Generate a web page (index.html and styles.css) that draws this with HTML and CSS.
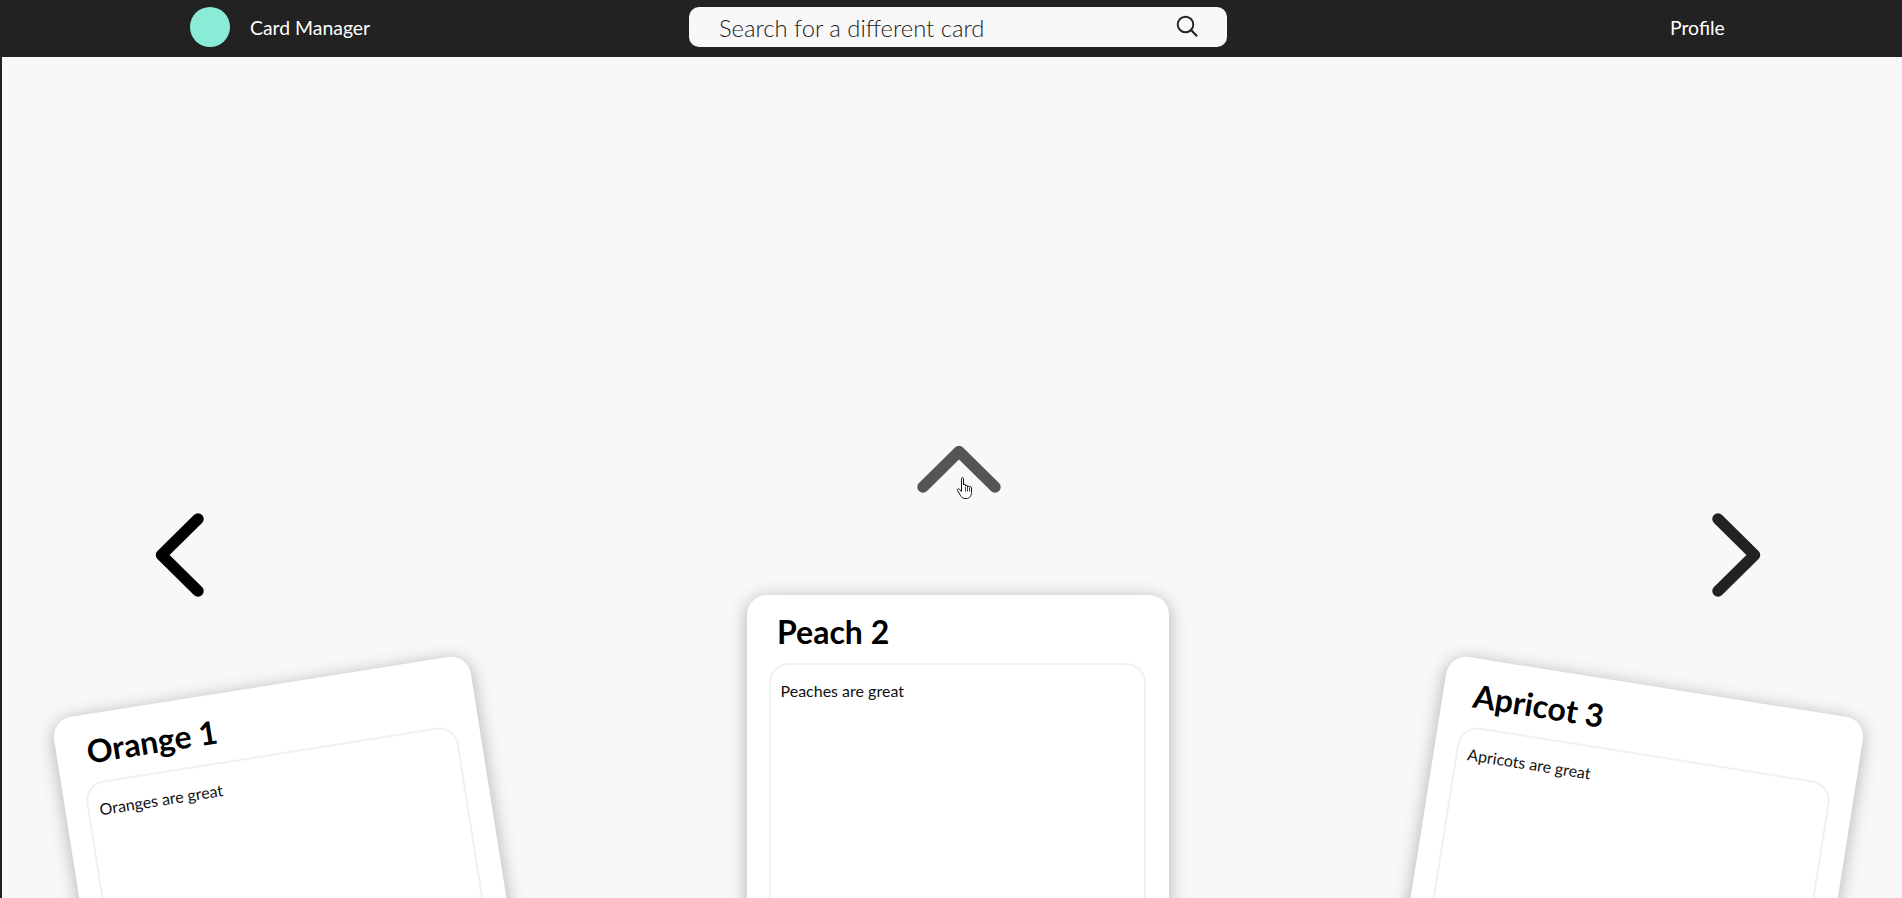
FILE: index.html
```html
<!DOCTYPE html>
<html lang="en">
<head>
<meta charset="utf-8">
<title>Card Manager</title>
<link rel="stylesheet" href="styles.css">
</head>
<body>
<header class="nav">
  <div class="brand">
    <span class="logo"></span>
    <span class="brand-name">Card Manager</span>
  </div>
  <div class="search">
    <span class="search-text">Search for a different card</span>
    <svg class="search-icon" viewBox="0 0 22 22" width="22" height="22" aria-hidden="true">
      <circle cx="9.5" cy="9.5" r="7.8" fill="none" stroke="#222" stroke-width="1.9"/>
      <path d="M15 15l5.4 5.6" fill="none" stroke="#222" stroke-width="2.2" stroke-linecap="round"/>
    </svg>
  </div>
  <a class="profile">Profile</a>
</header>
<main class="stage">
  <article class="card card-left">
    <h2 class="card-title">Orange 1</h2>
    <div class="card-body">Oranges are great</div>
  </article>
  <article class="card card-mid">
    <h2 class="card-title">Peach 2</h2>
    <div class="card-body">Peaches are great</div>
  </article>
  <article class="card card-right">
    <h2 class="card-title">Apricot 3</h2>
    <div class="card-body">Apricots are great</div>
  </article>

  <svg class="chev chev-up" viewBox="0 0 84 48" width="84" height="48" aria-hidden="true">
    <path d="M6 42L42 6.500L78 42" fill="none" stroke="#555" stroke-width="11.500" stroke-linecap="round" stroke-linejoin="round"/>
  </svg>
  <svg class="chev chev-left" viewBox="0 0 50 84" width="50" height="84" aria-hidden="true">
    <path d="M43 6L6.500 42L43 78" fill="none" stroke="#000" stroke-width="11.500" stroke-linecap="round" stroke-linejoin="round"/>
  </svg>
  <svg class="chev chev-right" viewBox="0 0 50 84" width="50" height="84" aria-hidden="true">
    <path d="M7 6L43.500 42L7 78" fill="none" stroke="#222" stroke-width="11.500" stroke-linecap="round" stroke-linejoin="round"/>
  </svg>
  <svg class="cursor" viewBox="0 0 18 23" width="18" height="23" aria-hidden="true">
    <path d="M5.500 1.500c0-1.300 2-1.300 2 0V8c0-1 2-1 2 0v1c0-1 2-1 2 0v1c0-1 2-1 2 0 .8-.5 2-.2 2 1v4.500c0 3-1.800 6-5 6H9c-2.500 0-3.500-1.500-4.500-3L1.500 13.500c-.8-1.200.8-2.300 1.800-1.300l2.200 2.300z" fill="#fff" stroke="#111" stroke-width="1" stroke-linejoin="round"/>
    <path d="M9.500 9.500v5M11.500 10v4.500M13.500 10.500v4" fill="none" stroke="#111" stroke-width=".8"/>
  </svg>
</main>
</body>
</html>
```
FILE: styles.css
```css
* { box-sizing: border-box; }
html, body { margin: 0; height: 100%; }
body {
  height: 898px;
  overflow: hidden;
  display: flex;
  flex-direction: column;
  background: #222;
  font-family: Lato, "Liberation Sans", sans-serif;
}
.nav {
  height: 57px;
  flex: none;
  display: flex;
  align-items: center;
  padding-bottom: 3px;
  background: #222;
  color: #fff;
  font-size: 19.4px;
}
.brand {
  display: flex;
  align-items: center;
  gap: 20px;
  margin-left: 190px;
  width: 499px;
}
.logo {
  width: 40px;
  height: 40px;
  border-radius: 50%;
  background: #8aecd7;
}
.search {
  width: 538px;
  height: 40px;
  display: flex;
  align-items: center;
  justify-content: space-between;
  padding: 0 29px 0 30px;
  background: #f8f8f8;
  border-radius: 10px;
}
.search-text {
  font-weight: 300;
  font-size: 23.8px;
  line-height: 30px;
  margin-top: 2px;
  color: #222;
}
.search-icon { margin-top: -2px; }
.profile { margin-left: 443px; }
.stage {
  position: relative;
  flex: 1;
  margin-left: 2px;
  background: #f8f8f8;
  display: flex;
  justify-content: space-between;
  align-items: flex-start;
  padding: 0 36px 0 49px;
  overflow: hidden;
}
.card {
  width: 422px;
  height: 520px;
  flex: none;
  padding: 0 23px 0 22px;
  background: #fff;
  border-radius: 20px;
  box-shadow: 0 3px 18px rgba(0, 0, 0, .3);
}
.card-left { margin-top: 663px; transform-origin: 0 0; transform: rotate(-9deg); }
.card-mid { margin-top: 538px; margin-right: 2px; }
.card-right { margin-top: 663px; transform-origin: 100% 0; transform: rotate(9deg); }
.card-title {
  margin: 0;
  height: 68px;
  padding: 18px 0 0 8.5px;
  font-size: 32px;
  line-height: 38px;
  font-weight: 700;
  color: #000;
}
.card-body {
  height: 420px;
  padding: 16px 10px;
  border: 2px solid #f0f0f0;
  border-radius: 20px;
  font-size: 16px;
  line-height: 20px;
  color: #111;
}
.chev { position: absolute; }
.chev-up { left: 915px; top: 388px; }
.chev-left { left: 153px; top: 456px; }
.chev-right { left: 1709px; top: 456px; }
.cursor { position: absolute; left: 954px; top: 420px; }
```
